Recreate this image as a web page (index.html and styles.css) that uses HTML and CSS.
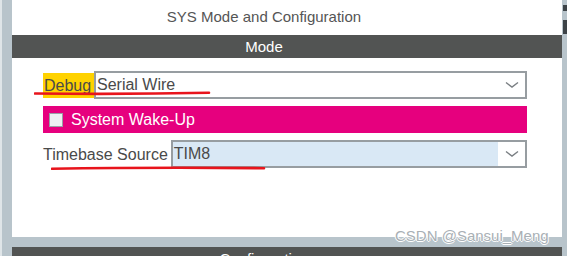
FILE: index.html
```html
<!DOCTYPE html>
<html>
<head>
<meta charset="utf-8">
<link rel="stylesheet" href="styles.css">
</head>
<body>
<div class="frame">
  <div class="main">
    <div class="panel">
      <div class="title">SYS Mode and Configuration</div>
      <div class="bar">Mode</div>
      <div class="content">
        <div class="row">
          <span class="label hl">Debug</span>
          <div class="select">
            <span class="value">Serial Wire</span>
            <span class="arrow"><svg width="14" height="8" viewBox="0 0 14 8"><path d="M1 1.5 L7 6 L13 1.5" fill="none" stroke="#7a7f83" stroke-width="1.4"/></svg></span>
          </div>
        </div>
        <div class="check-row">
          <span class="box"></span>
          <span class="check-text">System Wake-Up</span>
        </div>
        <div class="row">
          <span class="label">Timebase Source</span>
          <div class="select blue">
            <span class="value">TIM8</span>
            <span class="arrow"><svg width="14" height="8" viewBox="0 0 14 8"><path d="M1 1.5 L7 6 L13 1.5" fill="none" stroke="#7a7f83" stroke-width="1.4"/></svg></span>
          </div>
        </div>
      </div>
    </div>
    <div class="bar bottom">Configuration</div>
  </div>
  <div class="edge">
    <span class="mark m1"></span>
    <span class="mark m2"></span>
  </div>
</div>
<svg class="scribble s1" width="180" height="6" viewBox="0 0 180 6"><path d="M1 2.5 Q 90 3.5 175 1.8" stroke="#e8141c" stroke-width="2.6" fill="none" stroke-linecap="round"/></svg>
<svg class="scribble s2" width="216" height="6" viewBox="0 0 216 6"><path d="M1 3.8 Q 100 2.2 213 3.2" stroke="#e8141c" stroke-width="2.6" fill="none" stroke-linecap="round"/></svg>
<div class="watermark">CSDN @Sansui_Meng</div>
</body>
</html>
```
FILE: styles.css
```css
html, body {
  margin: 0;
  padding: 0;
}
body {
  width: 567px;
  height: 256px;
  overflow: hidden;
  background: #b8c4cb;
  font-family: "Liberation Sans", Arial, sans-serif;
  position: relative;
}
.frame {
  display: flex;
  height: 256px;
  border-left: 2px solid #dfe5e8;
  box-sizing: border-box;
}
.main {
  margin-left: 10px;
  width: 550px;
  display: flex;
  flex-direction: column;
}
.panel {
  background: #fff;
  height: 237px;
  flex: none;
}
.title {
  height: 35px;
  line-height: 33px;
  font-size: 15px;
  color: #555;
  text-align: center;
  padding-right: 46px;
}
.bar {
  height: 23px;
  line-height: 23px;
  background: #525453;
  color: #fff;
  font-size: 15px;
  text-align: center;
  padding-right: 46px;
}
.bar.bottom {
  margin-top: 10px;
  flex: none;
}
.content {
  padding: 13px 35px 0 31px;
  display: flex;
  flex-direction: column;
  gap: 7px;
}
.row {
  display: flex;
  align-items: center;
  height: 28px;
}
.label {
  font-size: 16px;
  color: #4a4a4a;
  line-height: 25px;
  height: 25px;
  padding-right: 3px;
}
.label.hl {
  background: #ffd200;
  padding-left: 1px;
  padding-right: 5px;
  width: 45px;
}
.select {
  flex: 1;
  height: 28px;
  box-sizing: border-box;
  border: 2px solid #979da1;
  display: flex;
  align-items: center;
  background: #fff;
}
.select .value {
  flex: 1;
  font-size: 16px;
  color: #4a4a4a;
  padding-left: 1px;
  line-height: 24px;
  height: 24px;
}
.select.blue .value {
  background: #d9e8f5;
}
.arrow {
  width: 26px;
  height: 24px;
  display: flex;
  align-items: center;
  justify-content: center;
  padding-left: 1px;
}
.check-row {
  height: 27px;
  background: #e6007e;
  display: flex;
  align-items: center;
}
.box {
  width: 14px;
  height: 14px;
  box-sizing: border-box;
  background: #eef0f2;
  border: 1px solid #9aa0a6;
  margin-left: 6px;
}
.check-text {
  color: #fff;
  font-size: 16px;
  margin-left: 8px;
}
.edge {
  flex: 1;
  display: flex;
  flex-direction: column;
  align-items: flex-end;
}
.mark {
  width: 4px;
  background: #3d4347;
}
.m1 {
  margin-top: 5px;
  height: 6px;
}
.m2 {
  margin-top: 9px;
  height: 14px;
}
.scribble {
  position: absolute;
}
.s1 {
  left: 34px;
  top: 91px;
}
.s2 {
  left: 51px;
  top: 165px;
}
.watermark {
  position: absolute;
  left: 395px;
  top: 227px;
  font-size: 15px;
  color: #a9b0b5;
  text-shadow: 1px 0 0 #fff, -1px 0 0 #fff, 0 1px 0 #fff, 0 -1px 0 #fff;
}
```
